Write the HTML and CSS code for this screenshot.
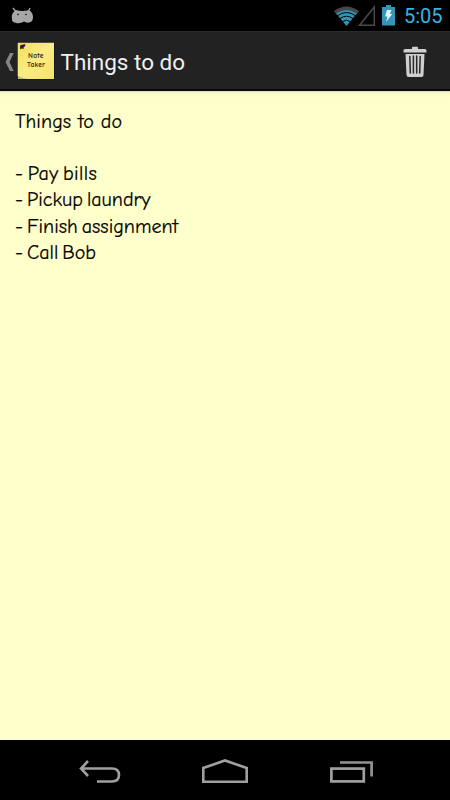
FILE: index.html
```html
<!DOCTYPE html>
<html>

<head>
    <meta charset="utf-8">
    <title>Note Taker</title>
    <link rel="stylesheet" href="styles.css">
</head>

<body>
    <div class="status-bar">
        <svg class="android" width="24" height="18" viewBox="0 0 24 18">
            <path d="M2 1l3 4M19 1l-2 4" stroke="#a6a6a6" stroke-width="1.3"/>
            <path d="M5 3Q11 5 18 3Q22 6 22 10Q22 15 18 15.500Q15 16 13 14.500Q9 17 5 16Q0 15 1 11Q0 6 5 3Z" fill="#a6a6a6"/>
            <circle cx="7" cy="7.500" r=".8" fill="#000"/>
            <circle cx="15" cy="7.500" r=".8" fill="#000"/>
        </svg>
        <svg class="signals" width="64" height="22" viewBox="0 0 64 22">
            <path d="M0 6Q12.500-3 25 6L22.500 9.500Q12.500 2.500 2.500 9.500Z" fill="#484848"/>
            <path d="M2.200 8.600Q12.500 1.200 22.800 8.600L12.500 21Z" fill="#3594b8"/>
            <path d="M3.500 10.700Q12.500 4.300 21.500 10.700M6 13.500Q12.500 9 19 13.500M8.500 16.600Q12.500 13.800 16.500 16.600" fill="none" stroke="#000" stroke-width="1"/>
            <path d="M25.500 20.300L40.300 2V20.300Z" fill="none" stroke="#4b4b4b" stroke-width="1.500"/>
            <path d="M48 2h4V0h5v2h4v18.500H48Z" fill="#3594b8"/>
            <path d="M53 5h4.500l-1.700 4h2.500L52 17l1.500-5.500H51Z" fill="#e4f4fa"/>
        </svg>
        <span class="clock">5:05</span>
    </div>

    <div class="action-bar">
        <svg class="up" width="9" height="20" viewBox="0 0 9 20">
            <path d="M5 1H8.700L4.500 10L8.700 19H5L0.500 10Z" fill="#858585"/>
        </svg>
        <svg class="note-icon" width="38" height="38" viewBox="0 0 38 38">
            <defs>
                <linearGradient id="paper" x1="0" y1="0" x2="1" y2="1">
                    <stop offset="0" stop-color="#f3df57"/>
                    <stop offset=".5" stop-color="#faec85"/>
                    <stop offset="1" stop-color="#f5e264"/>
                </linearGradient>
            </defs>
            <rect width="38" height="38" fill="#131a2c"/>
            <path d="M.7.700H37V37H8Q4 36 .7 34.500Z" fill="url(#paper)"/>
            <path d="M1 34Q6 36 10 37H1Z" fill="#c3bb85"/>
            <path d="M3.500 3.500l2-.5 2.500-.5-.5 2-1.500.5 .5 1.500-1.500-.5-1.500 1z" fill="#30152e" stroke="#30152e" stroke-width=".7"/>
            <text class="icon-text" x="11" y="15.600" textLength="15.500">Note</text>
            <text class="icon-text" x="10" y="24.800" textLength="18">Taker</text>
        </svg>
        <h1>Things to do</h1>
        <svg class="trash" width="24" height="32" viewBox="0 0 24 32">
            <path d="M9 3V1.500Q9 .7 10 .7h4q1 0 1 .8V3h7q1.500 0 1.500 1.500V6.500H.5V4.500Q.5 3 2 3Z" fill="#cfcfcf"/>
            <path d="M2.500 8h19L20.500 29Q20.500 31 18.500 31h-13Q3.500 31 3.500 29Z" fill="#cfcfcf"/>
            <path d="M6.800 10.500L7.300 27M10.400 10v17M13.700 10v17M17.200 10.500L16.700 27" stroke="#282828" stroke-width="1.500" stroke-linecap="round"/>
        </svg>
    </div>

    <div class="note">
        <p class="line title">Things to do</p>
        <p class="line">&nbsp;</p>
        <p class="line item bills">- Pay bills</p>
        <p class="line item">- Pickup laundry</p>
        <p class="line item">- Finish assignment</p>
        <p class="line item">- Call Bob</p>
    </div>

    <div class="nav-bar">
        <svg width="42" height="26" viewBox="0 0 42 26">
            <path d="M9 2L2 9.500L9 17M2 9.500H33Q40 9.500 40 16T33 22.500H18" transform="translate(0 1)" fill="none" stroke="#a0a0a0" stroke-width="2.600"/>
        </svg>
        <svg width="46" height="26" viewBox="0 0 46 26">
            <path d="M1.300 23.200V9.500L23 2L44.700 9.500V23.200Z" transform="translate(0 .5)" fill="none" stroke="#a0a0a0" stroke-width="2.600"/>
        </svg>
        <svg class="recent" width="43" height="26" viewBox="0 0 43 26">
            <path d="M10 4.500H41.600V18.500" fill="none" stroke="#929292" stroke-width="2.700"/>
            <rect x="1.400" y="10.600" width="32.400" height="12.800" fill="none" stroke="#a0a0a0" stroke-width="2.700"/>
        </svg>
    </div>
</body>

</html>
```

FILE: styles.css
```css
body{
    margin: 0;
    height: 800px;
    display: flex;
    flex-direction: column;
    background-color: #000;
    font-family: Roboto, sans-serif;
    overflow: hidden;
}

svg{
    display: block;
    flex: none;
}

.status-bar{
    height: 31px;
    display: flex;
    align-items: flex-start;
    box-sizing: border-box;
    padding: 5px 7px 0 11px;
}
.android{
    margin-top: 2px;
}
.signals{
    margin-left: auto;
}
.clock{
    width: 39px;
    margin-left: 6px;
    font-size: 20px;
    line-height: 23px;
    color: #33b5e5;
}

.action-bar{
    height: 60px;
    display: flex;
    align-items: center;
    box-sizing: border-box;
    padding: 2px 23px 0 5px;
    background-color: #222;
    border-top: 1px solid #2b2b2b;
    border-bottom: 2px solid #080808;
}
.note-icon{
    margin: -1px 0 0 2.5px;
}
.icon-text{
    font: 7.5px "Comic Neue", Lato, sans-serif;
    font-weight: bold;
    fill: #302b16;
}
h1{
    flex: 1;
    margin: 0 0 0 6px;
    font-size: 22.5px;
    font-weight: normal;
    line-height: 28px;
    color: #f0f0f0;
}

.note{
    flex: 1;
    padding: 17.6px 15px;
    background: linear-gradient(#dddcb0, #f9f8c7 2px, #ffffcc 6px);
}
.line{
    margin: 0;
    font-family: "Comic Sans MS", "Comic Neue", Lato, sans-serif;
    font-size: 20px;
    line-height: 26.3px;
    color: #000;
    white-space: nowrap;
    -webkit-text-stroke: 0.2px #000;
}
.title{
    letter-spacing: 0.1px;
}
.item{
    word-spacing: -2.7px;
}
.bills{
    letter-spacing: 0.4px;
}

.nav-bar{
    height: 60px;
    display: flex;
    justify-content: space-between;
    align-items: flex-start;
    box-sizing: border-box;
    padding: 18px 77px 0 79px;
}
.recent{
    margin-left: 1px;
}
```
